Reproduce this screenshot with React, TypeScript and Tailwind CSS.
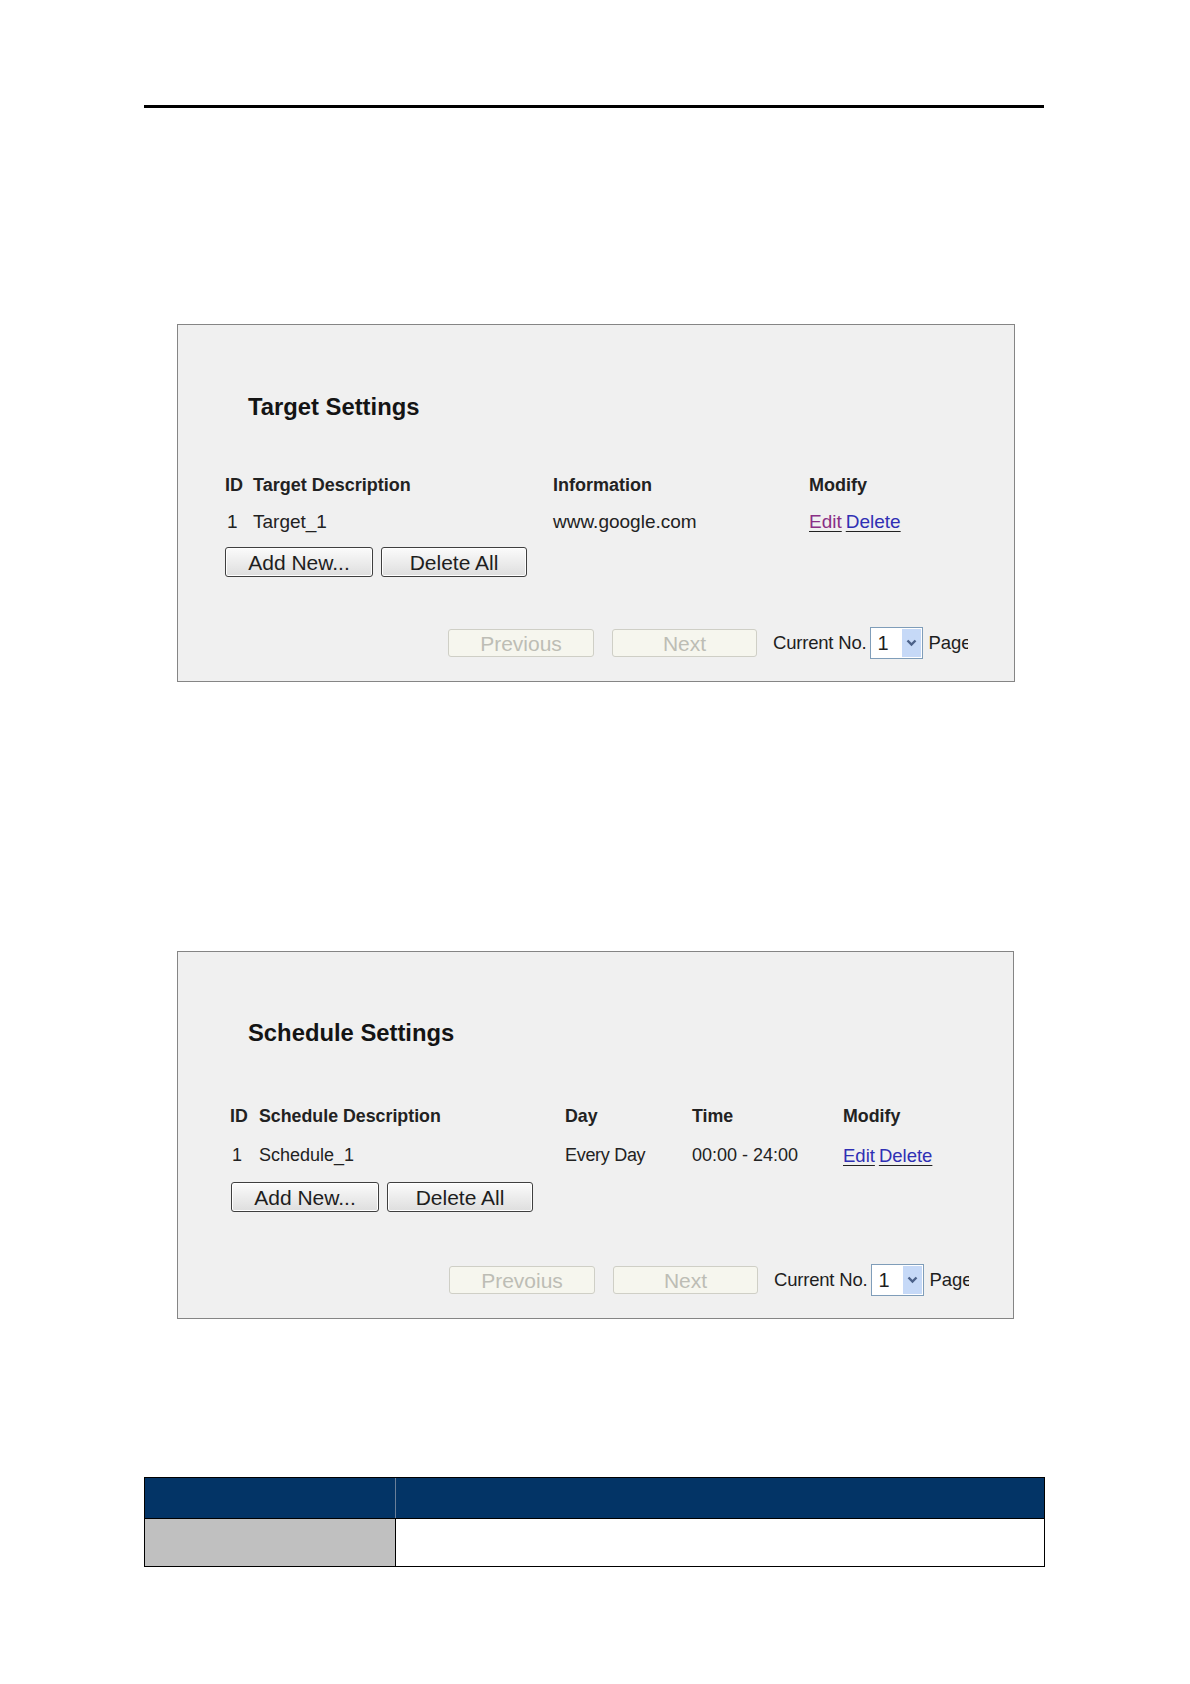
import type { ReactNode } from 'react';

const font = { fontFamily: '"Liberation Sans", Arial, sans-serif' };

function Btn({ children, disabled, className }: { children: ReactNode; disabled?: boolean; className?: string }) {
  return (
    <div
      className={`flex items-center justify-center rounded-[3px] text-[21px] leading-none ${
        disabled
          ? 'h-[28px] border border-[#cfcfc6] bg-[#f6f6ee] text-[#bdbdb5]'
          : 'h-[30px] border border-[#3f3f3f] bg-gradient-to-b from-[#fbfbfb] to-[#dedede] text-[#1e1e1e] shadow-[inset_0_0_0_1px_#ffffff]'
      } ${className ?? ''}`}
    >
      {children}
    </div>
  );
}

function Pager({ prevLabel, left }: { prevLabel: string; left: string }) {
  return (
    <div className={`flex items-center ${left}`}>
      <Btn disabled className="w-[146px]">{prevLabel}</Btn>
      <Btn disabled className="ml-[18px] w-[145px]">Next</Btn>
      <span className="ml-[16px] text-[18.5px] tracking-[-0.2px] text-[#1e1e1e]">Current No.</span>
      <div className="ml-[4px] flex h-[32px] w-[53px] items-center border border-[#7f9db9] bg-white">
        <span className="flex-1 pl-[6px] text-[20px] text-[#1e1e1e]">1</span>
        <span className="mr-[1px] flex h-[28px] w-[19px] items-center justify-center bg-[#c6d9f7]">
          <svg width="11" height="8" viewBox="0 0 11 8">
            <path d="M1.5 1.5 L5.5 5.5 L9.5 1.5" stroke="#4b6189" strokeWidth="2.4" fill="none" />
          </svg>
        </span>
      </div>
      <span className="ml-[5px] w-[40px] overflow-hidden whitespace-nowrap text-[18.5px] text-[#1e1e1e]">Page</span>
    </div>
  );
}

function Links({ editVisited }: { editVisited?: boolean }) {
  return (
    <span className="flex gap-[4px] underline underline-offset-[3px]">
      <span className={editVisited ? 'text-[#8a2f86]' : 'text-[#2f2fb4]'}>Edit</span>
      <span className="text-[#2f2fb4]">Delete</span>
    </span>
  );
}

function TargetPanel() {
  return (
    <section className="ml-[177px] mt-[216px] h-[358px] w-[838px] border border-[#858585] bg-[#f0f0f0]">
      <h2 className="ml-[70px] mt-[68px] text-[23.8px] font-bold leading-[28px] text-[#141414]">Target Settings</h2>
      <div className="ml-[47px] mt-[46px] text-[19px] text-[#222]">
        <div className="flex h-[37px] items-center text-[18px] font-bold">
          <span className="w-[28px]">ID</span>
          <span className="w-[300px]">Target Description</span>
          <span className="w-[256px]">Information</span>
          <span>Modify</span>
        </div>
        <div className="flex h-[37px] items-center">
          <span className="w-[28px] pl-[2px]">1</span>
          <span className="w-[300px]">Target_1</span>
          <span className="w-[256px]">www.google.com</span>
          <Links editVisited />
        </div>
        <div className="mt-[6px] flex gap-[8px]">
          <Btn className="w-[148px]">Add New...</Btn>
          <Btn className="w-[146px]">Delete All</Btn>
        </div>
      </div>
      <Pager prevLabel="Previous" left="ml-[270px] mt-[50px]" />
    </section>
  );
}

function SchedulePanel() {
  return (
    <section className="ml-[177px] mt-[269px] h-[368px] w-[837px] border border-[#858585] bg-[#f0f0f0]">
      <h2 className="ml-[70px] mt-[67px] text-[23.8px] font-bold leading-[28px] text-[#141414]">Schedule Settings</h2>
      <div className="ml-[52px] mt-[50px] text-[18px] text-[#222]">
        <div className="flex h-[39px] items-center text-[17.8px] font-bold">
          <span className="w-[29px]">ID</span>
          <span className="w-[306px]">Schedule Description</span>
          <span className="w-[127px]">Day</span>
          <span className="w-[151px]">Time</span>
          <span>Modify</span>
        </div>
        <div className="flex h-[39px] items-center">
          <span className="w-[29px] pl-[2px]">1</span>
          <span className="w-[306px]">Schedule_1</span>
          <span className="w-[127px] tracking-[-0.3px]">Every Day</span>
          <span className="w-[151px]">00:00 - 24:00</span>
          <span className="text-[18.5px]">
            <Links />
          </span>
        </div>
        <div className="mt-[7px] flex gap-[8px] pl-[1px]">
          <Btn className="w-[148px]">Add New...</Btn>
          <Btn className="w-[146px]">Delete All</Btn>
        </div>
      </div>
      <Pager prevLabel="Prevoius" left="ml-[271px] mt-[52px]" />
    </section>
  );
}

export default function App() {
  return (
    <div className="min-h-[1684px] w-[1190px] bg-white pt-[105px]" style={font}>
      {/* header rule */}
      <div className="ml-[144px] h-[3px] w-[900px] bg-black" />

      <TargetPanel />
      <SchedulePanel />

      {/* table */}
      <div className="ml-[144px] mt-[158px] w-[901px] border-[1.5px] border-black">
        <div className="flex h-[40px] bg-[#033466]">
          <div className="w-[251px] border-r border-[#6a7f99]" />
          <div className="flex-1" />
        </div>
        <div className="flex h-[48px] border-t-[1.5px] border-black">
          <div className="w-[251px] border-r-[1.5px] border-black bg-[#c0c0c0]" />
          <div className="flex-1 bg-white" />
        </div>
      </div>
    </div>
  );
}
